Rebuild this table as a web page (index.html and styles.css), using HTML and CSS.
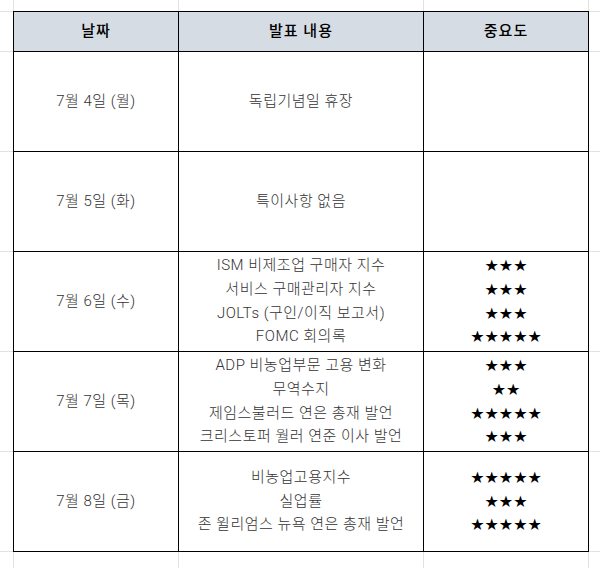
FILE: index.html
```html
<!DOCTYPE html>
<html lang="ko">
<head>
<meta charset="utf-8">
<link rel="stylesheet" href="styles.css">
</head>
<body>
<div class="sheet">
  <div class="cell head">날짜</div>
  <div class="cell head">발표 내용</div>
  <div class="cell head">중요도</div>

  <div class="cell">7월 4일 (월)</div>
  <div class="cell">독립기념일 휴장</div>
  <div class="cell"></div>

  <div class="cell">7월 5일 (화)</div>
  <div class="cell">특이사항 없음</div>
  <div class="cell"></div>

  <div class="cell">7월 6일 (수)</div>
  <div class="cell"><span>ISM 비제조업 구매자 지수</span><span>서비스 구매관리자 지수</span><span>JOLTs (구인/이직 보고서)</span><span>FOMC 회의록</span></div>
  <div class="cell stars"><span>★★★</span><span>★★★</span><span>★★★</span><span>★★★★★</span></div>

  <div class="cell">7월 7일 (목)</div>
  <div class="cell"><span>ADP 비농업부문 고용 변화</span><span>무역수지</span><span>제임스불러드 연은 총재 발언</span><span>크리스토퍼 월러 연준 이사 발언</span></div>
  <div class="cell stars"><span>★★★</span><span>★★</span><span>★★★★★</span><span>★★★</span></div>

  <div class="cell">7월 8일 (금)</div>
  <div class="cell"><span>비농업고용지수</span><span>실업률</span><span>존 윌리엄스 뉴욕 연은 총재 발언</span></div>
  <div class="cell stars"><span>★★★★★</span><span>★★★</span><span>★★★★★</span></div>
</div>
</body>
</html>
```
FILE: styles.css
```css
html, body {
  margin: 0;
  padding: 0;
  height: 100%;
}
body {
  background-color: #ffffff;
  background-image:
    linear-gradient(#e2e2e2, #e2e2e2),
    linear-gradient(#e2e2e2, #e2e2e2),
    linear-gradient(#e2e2e2, #e2e2e2),
    linear-gradient(#e2e2e2, #e2e2e2),
    linear-gradient(#e2e2e2, #e2e2e2),
    linear-gradient(#e2e2e2, #e2e2e2),
    linear-gradient(#e2e2e2, #e2e2e2),
    linear-gradient(#e2e2e2, #e2e2e2),
    linear-gradient(#e2e2e2, #e2e2e2),
    linear-gradient(#e2e2e2, #e2e2e2),
    linear-gradient(#e2e2e2, #e2e2e2);
  background-repeat: no-repeat;
  background-size:
    1px 100%, 1px 100%, 1px 100%, 1px 100%,
    100% 1px, 100% 1px, 100% 1px, 100% 1px, 100% 1px, 100% 1px, 100% 1px;
  background-position:
    13px 0, 178px 0, 423px 0, 588px 0,
    0 11px, 0 51px, 0 151px, 0 251px, 0 351px, 0 451px, 0 551px;
  font-family: "Roboto", "Noto Sans CJK KR", sans-serif;
}
.sheet {
  margin: 11px 0 0 13px;
  width: 574px;
  display: grid;
  grid-template-columns: 164px 244px 164px;
  grid-template-rows: 39px repeat(5, 99px);
  gap: 1px;
  background: #000;
  border: 1px solid #000;
}
.cell {
  background: #fff;
  display: flex;
  flex-direction: column;
  align-items: center;
  justify-content: center;
  font-size: 15px;
  font-weight: 300;
  letter-spacing: 0.5px;
  line-height: 23.7px;
  color: #333;
  white-space: nowrap;
}
.cell.head {
  background: #d6dce4;
  color: #000;
  font-weight: 500;
  font-size: 15px;
  letter-spacing: 1px;
}
.cell.stars {
  font-family: "DejaVu Sans", sans-serif;
  font-size: 16px;
  letter-spacing: 0;
  color: #000;
  font-weight: 400;
}
```
